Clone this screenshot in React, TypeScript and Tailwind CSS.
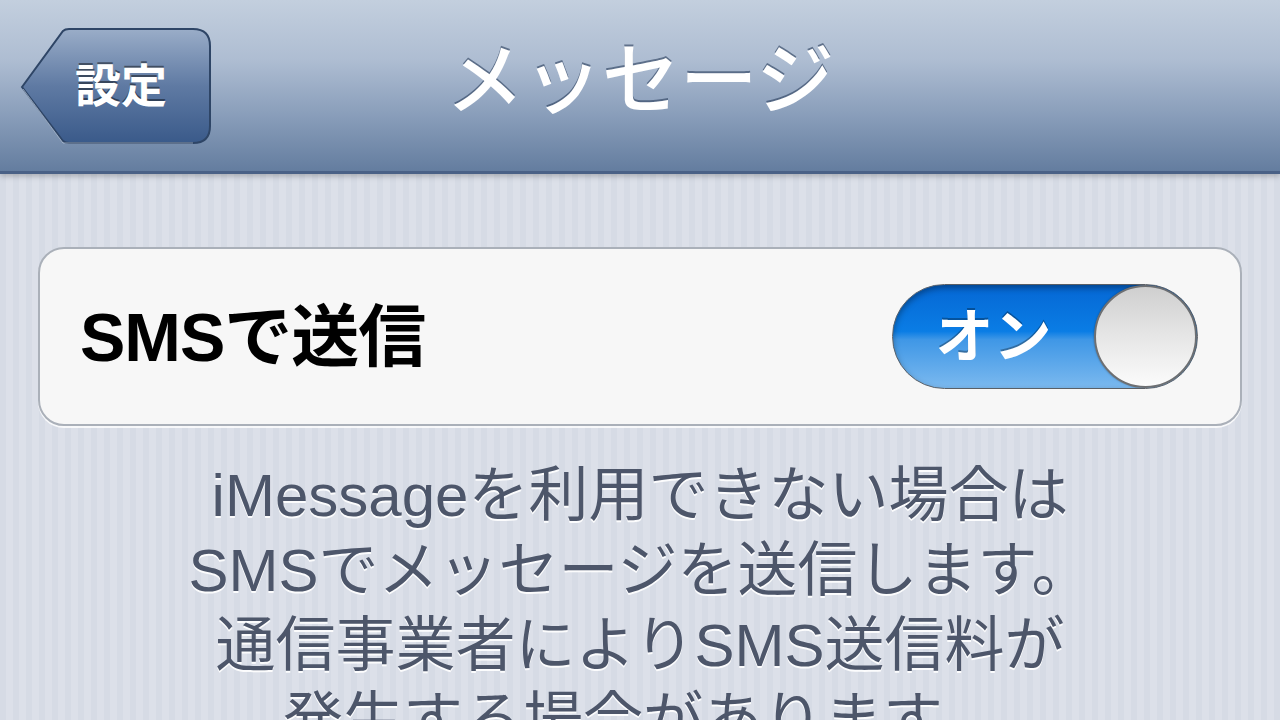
import React from "react";

const jp = "font-['Helvetica_Neue','Liberation_Sans','Noto_Sans_CJK_JP',sans-serif]";

function BackButton() {
  return (
    <div className="relative w-[194px] h-[118px] ml-[19px] flex items-center justify-center">
      <svg className="absolute inset-0" width="194" height="118" viewBox="0 0 194 118">
        <defs>
          <linearGradient id="bb" x1="0" y1="0" x2="0" y2="1">
            <stop offset="0" stopColor="#9aadc8" />
            <stop offset="0.5" stopColor="#5f7aa3" />
            <stop offset="1" stopColor="#3a5a8a" />
          </linearGradient>
        </defs>
        <path
          d="M3 60 L44 4 Q46 2 50 2 L174 2 Q191 2 191 19 L191 99 Q191 116 174 116 L50 116 Q46 116 44 114 Z"
          fill="url(#bb)"
          stroke="#2e4566"
          strokeWidth="2"
        />
        <path d="M4 62 L44 116 L174 116" fill="none" stroke="#c9d3e1" strokeWidth="1" opacity="0.6" />
      </svg>
      <span
        className={`relative pl-[10px] text-white text-[46px] font-bold leading-none ${jp} [text-shadow:0_-2px_0_rgba(0,0,0,0.45)]`}
      >
        設定
      </span>
    </div>
  );
}

function Toggle() {
  return (
    <div className="relative w-[306px] h-[105px] shrink-0 rounded-full overflow-hidden border border-[#5a5f66] bg-[linear-gradient(180deg,#0567d4_0%,#0a7de5_45%,#3f97e6_53%,#7bb9ef_100%)] shadow-[inset_0_3px_6px_rgba(0,0,0,0.35)] flex items-center">
      <span
        className={`w-[203px] text-center text-white text-[58px] font-semibold leading-none ${jp} [text-shadow:0_-2px_0_rgba(0,0,0,0.3)]`}
      >
        オン
      </span>
      <div className="w-[103px] h-[103px] shrink-0 rounded-full border-2 border-[#6d6f72] bg-[linear-gradient(180deg,#cfcfcf_0%,#e6e6e6_50%,#fbfbfb_100%)] shadow-[0_0_2px_rgba(0,0,0,0.4)]" />
    </div>
  );
}

export default function App() {
  const lines = [
    "iMessageを利用できない場合は",
    "SMSでメッセージを送信します。",
    "通信事業者によりSMS送信料が",
    "発生する場合があります。",
  ];

  return (
    <div className="w-[1280px] h-[720px] overflow-hidden flex flex-col bg-[#d9dee7] bg-[repeating-linear-gradient(90deg,#d6dbe5_0px,#d6dbe5_6px,#dce0e9_6px,#dce0e9_13px)]">
      {/* Nav bar */}
      <div className="relative h-[174px] shrink-0 flex items-center bg-[linear-gradient(180deg,#c3cfde_0%,#aebdd2_35%,#869bb8_70%,#647d9f_100%)] border-b-[3px] border-[#4a6186] shadow-[0_2px_6px_rgba(0,0,0,0.25)]">
        <BackButton />
        <div className="absolute inset-x-0 top-0 h-[162px] flex items-center justify-center pointer-events-none">
          <span
            className={`text-white text-[78px] font-medium leading-none ${jp} [text-shadow:0_-2px_0_rgba(40,60,90,0.6)]`}
          >
            メッセージ
          </span>
        </div>
      </div>

      {/* Settings group */}
      <div className="mt-[73px] mx-[38px] h-[179px] shrink-0 rounded-[26px] bg-[#f7f7f7] border-2 border-[#aab0b9] shadow-[0_2px_0_rgba(255,255,255,0.8)] flex items-center justify-between pl-[40px] pr-[42px]">
        <span className={`text-black text-[68px] font-bold leading-none tracking-[-1px] ${jp}`}>SMSで送信</span>
        <Toggle />
      </div>

      {/* Footer text */}
      <div className="mt-[32px] shrink-0 flex flex-col items-center">
        {lines.map((l) => (
          <p
            key={l}
            className={`h-[75px] leading-[75px] text-[60px] text-[#4d566a] ${jp} [text-shadow:0_2px_0_rgba(255,255,255,0.9)] whitespace-nowrap`}
          >
            {l}
          </p>
        ))}
      </div>
    </div>
  );
}
